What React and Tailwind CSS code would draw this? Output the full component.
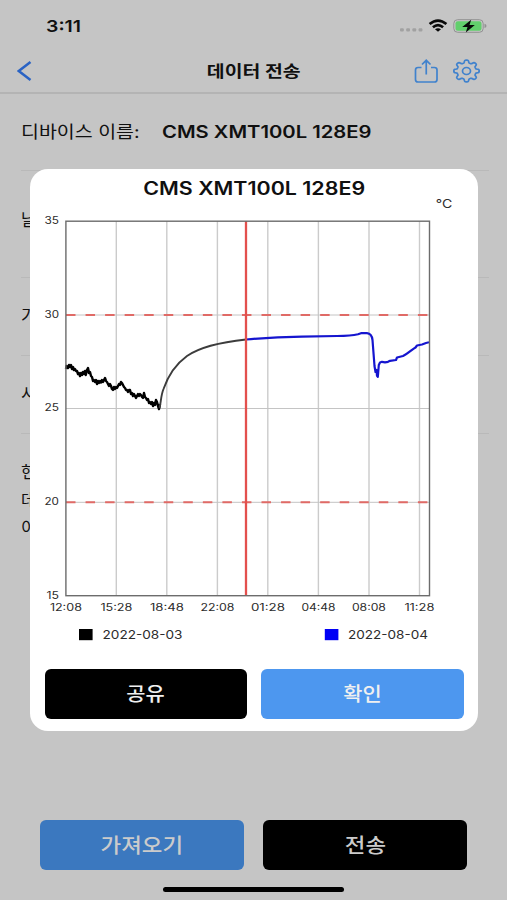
import React from "react";

const BLACK_TRACE =
  "66,369 66.500,366 68,368 69,365 70,367 71,365 72,369 73,367 74,370 75,369 76,371 77,371 78,374 79,373 80,376 81,373 82,375 83,372 84,374 85,371 85.800,375 87,370 88,368 89,373 90,372 91,376 92,377 93,381 94,380 95,382 96,380 97,384 98,381 99,383 100,381 101,382.500 102,380 103,382 104,380 105,378 106,381 107,382 108,384 109,386 110,384 111,386 112,389 113,390 114,387 115,389 116,387 117,388 118,386 119,384 120,385 121,382 122,383 123,385 124,387 125,388 126,390 127,390 128,392 129,390 130,390 131,394 132,393 133,396 134,394 135,396 136,398 137,396 138,394 139,396 140,394 141,395 142,397 143,398 144,393 145,397 146,398 147,400 148,399 149,403 150,402 151,404 152,402 153,406 154,403 155,405 156,400 157,402 158,406 159,409 160,404";

const RECOVERY =
  "M159.5 408C161 402 161 395 163.500 389C168 376 176 364 187 356C200 347 222 342 246 339.500";

const BLUE_TRACE =
  "M246 339.500C263 338 280 337 302 336.700L337 336C350 336 354 335.300 358 334.300L361 333.200 367 333.200C371 333.500 372 336 372.500 340L374.500 366L375.500 372 376.500 370 377 376 378 371 377.800 377 378.800 365 380 362.500 382 361.800 385 362.300 388 361.800 390 360.800 396 360 397 357.500 403 356C409 353 412 349.500 415.500 347.500L417 345.500 422 344.500 426 343 429 342.300";

const TIMES = ["12:08", "15:28", "18:48", "22:08", "01:28", "04:48", "08:08", "11:28"];

// Eight-toothed gear outline with softly flattened teeth.
const GEAR =
  "M" +
  Array.from({ length: 144 }, (_, i) => {
    const a = (i / 144) * Math.PI * 2;
    const r = 9.500 + 1.350 * Math.tanh(2.200 * Math.cos(8 * a));
    return `${(13.5 + r * 1.170 * Math.cos(a)).toFixed(2)} ${(12 + r * Math.sin(a)).toFixed(2)}`;
  }).join("L") +
  "Z";

function StatusIcons() {
  return (
    <svg className="h-4 w-[90px]" viewBox="399 18 90 16">
      {[400, 406.2, 412.4, 418.6].map((x) => (
        <rect key={x} x={x} y="28.300" width="3.800" height="3.300" rx="1" fill="#a1a1a1" />
      ))}
      <g fill="none" stroke="#080808" strokeWidth="2.600">
        <path d="M429.600 24.100Q438 17 446.400 24.100" />
        <path d="M432.900 27.300Q438 22.900 443.100 27.300" />
      </g>
      <path d="M435 29.300Q438 27 441 29.300L438 31.700Z" fill="#080808" />
      <rect x="453.800" y="19.700" width="29.400" height="12.600" rx="3.800" fill="#c5c5c5" stroke="#929292" />
      <rect x="455.500" y="21.200" width="26" height="9.600" rx="2.200" fill="#62cf6c" />
      <path d="M484.500 23.800Q486.500 24.300 486.500 26T484.500 28Z" fill="#929292" />
      <path d="M471.200 19.800L462.200 27H467.500L465.800 32.500L474.800 25H469.500Z" fill="#080808" />
    </svg>
  );
}

function Chart() {
  return (
    <svg className="block h-[446px] w-[448px] shrink-0 overflow-visible" viewBox="30 204 448 446" fontFamily='Inter, "Liberation Sans", sans-serif' fill="#2c2c2c">
      {[116.3, 166.8, 217.4, 267.8, 318.4, 369, 419.5].map((x) => (
        <path key={x} d={`M${x} 221V596`} stroke="#cbcbcb" strokeWidth="1.400" />
      ))}
      {[315, 408.5, 502.3].map((y) => (
        <path key={y} d={`M66 ${y}H429`} stroke="#c4c4c4" />
      ))}
      {[315, 502.3].map((y) => (
        <path key={y} d={`M66 ${y}H428`} stroke="#e06a66" strokeWidth="2" strokeDasharray="9.500 10.050" />
      ))}
      <polyline points={BLACK_TRACE} fill="none" stroke="#000" strokeWidth="2.400" strokeLinejoin="round" />
      <path d={RECOVERY} fill="none" stroke="#3c3c3c" strokeWidth="1.900" />
      <path d={BLUE_TRACE} fill="none" stroke="#1515cf" strokeWidth="2.200" strokeLinejoin="round" />
      <path d="M246 221V596" stroke="#e3504d" strokeWidth="2.300" />
      <rect x="65.900" y="221.200" width="363.600" height="374.500" fill="none" stroke="#6c6c6c" strokeWidth="1.400" />
      {[35, 30, 25, 20, 15].map((n, i) => (
        <text key={n} x={n === 15 ? 46.5 : 44.5} y={224.2 + i * 93.6} fontSize="10" textLength={n === 15 ? 12.5 : 14.5} lengthAdjust="spacingAndGlyphs">{n}</text>
      ))}
      {TIMES.map((t, i) => (
        <text key={t} x={65.9 + i * 50.5} y="610.500" fontSize="10" textAnchor="middle" textLength={i === 7 ? 30 : i === 0 || i === 1 ? 32 : 34} lengthAdjust="spacingAndGlyphs">{t}</text>
      ))}
      <text x="435.800" y="208.400" fontSize="12" textLength="16.500" lengthAdjust="spacingAndGlyphs">°C</text>
      <rect x="79" y="629" width="13.600" height="11.200" fill="#000" />
      <text x="102.500" y="639" fontSize="11.500" textLength="80" lengthAdjust="spacingAndGlyphs">2022-08-03</text>
      <rect x="324.800" y="629" width="13.600" height="11.200" fill="#0000f5" />
      <text x="348" y="639" fontSize="11.500" textLength="80" lengthAdjust="spacingAndGlyphs">2022-08-04</text>
    </svg>
  );
}

export default function App() {
  return (
    <div className="relative flex h-[900px] w-[507px] flex-col overflow-hidden bg-[#c5c5c5] font-[Inter,'Noto_Sans_CJK_KR',sans-serif] text-[#101010]">
      <div className="flex h-[52px] shrink-0 items-center justify-between pl-[46px] pr-[18px]">
        <span className="origin-left scale-x-[1.18] text-[16.500px] font-semibold leading-none">3:11</span>
        <StatusIcons />
      </div>
      <header className="grid h-[42px] shrink-0 grid-cols-[1fr_auto_1fr] items-center border-b-2 border-[#b4b4b4] pb-0.5">
        <svg className="ml-[17px] h-5 w-[15px]" viewBox="0 0 15 20" fill="none" stroke="#2a63c4" strokeWidth="2.500">
          <path d="M13.500 1L1.800 10L13.500 19" />
        </svg>
        <h1 className="scale-x-[1.21] text-[16px] font-bold leading-none">데이터 전송</h1>
        <div className="flex items-center justify-end gap-[15px] pr-[27px] text-[#4082cd]">
          <svg className="h-6 w-6" viewBox="0 0 24 24" fill="none" stroke="currentColor" strokeWidth="1.700">
            <path d="M7.500 8.500H4Q1.500 8.500 1.500 11V20.500Q1.500 23 4 23H20.500Q23 23 23 20.500V11Q23 8.500 20.500 8.500H17M12.250 15.500V1.500M8 5.500L12.250 1.300L16.500 5.500" />
          </svg>
          <svg className="h-6 w-[27px]" viewBox="0 0 27 24" fill="none" stroke="currentColor" strokeWidth="1.700" strokeLinejoin="round">
            <path d={GEAR} />
            <ellipse cx="13.500" cy="12" rx="4" ry="3.500" />
          </svg>
        </div>
      </header>
      <main className="flex flex-col pl-[21px] pr-[18px] text-[16.500px] leading-none">
        <div className="flex h-[77px] items-center border-b border-[#b9b9b9]">
          <span className="w-[141px] shrink-0"><span className="inline-block origin-left scale-x-[1.18] whitespace-nowrap">디바이스 이름:</span></span>
          <span className="origin-left scale-x-[1.19] whitespace-nowrap text-[17px] font-semibold">CMS XMT100L 128E9</span>
        </div>
        <div className="flex h-[107px] items-center border-b border-[#b9b9b9] pb-2">날</div>
        <div className="flex h-[78px] items-center border-b border-[#b9b9b9]">기</div>
        <div className="flex h-[78px] items-center border-b border-[#b9b9b9]">시</div>
        <div className="flex flex-col pt-[24px] leading-[28px]">
          <span>현</span>
          <span>데</span>
          <span>이</span>
        </div>
      </main>
      <footer className="mt-auto flex flex-col items-center pb-2">
        <div className="flex gap-[19px] text-[20px] text-[#cbcbcb]">
          <button className="h-[50px] w-[204px] rounded-md bg-[#3b78bf] pt-0.5"><span className="inline-block scale-x-[1.12] font-medium">가져오기</span></button>
          <button className="h-[50px] w-[204px] rounded-md bg-black pt-0.5"><span className="inline-block scale-x-[1.12] font-medium">전송</span></button>
        </div>
        <div className="mt-[17px] h-[5px] w-[181px] rounded-full bg-black" />
      </footer>
      <section className="absolute left-[30px] top-[169px] flex h-[562px] w-[448px] flex-col rounded-[18px] bg-white">
        <h2 className="flex h-[35px] shrink-0 items-center justify-center pt-1 text-[18px] font-semibold leading-none">
          <span className="scale-x-[1.19] whitespace-nowrap">CMS XMT100L 128E9</span>
        </h2>
        <Chart />
        <div className="mt-[19px] flex gap-[14px] px-[14.500px] text-[19px] font-medium text-[#f0f0f0]">
          <button className="h-[50px] flex-1 rounded-md bg-black pt-0.5"><span className="inline-block scale-x-[1.1]">공유</span></button>
          <button className="h-[50px] flex-1 rounded-md bg-[#4d97ef] pt-0.5"><span className="inline-block scale-x-[1.1]">확인</span></button>
        </div>
      </section>
    </div>
  );
}
